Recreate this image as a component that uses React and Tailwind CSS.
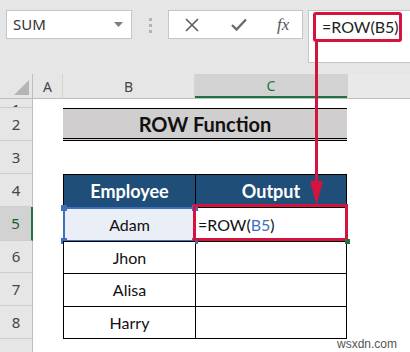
const rows = [
  { n: "1", h: "h-[9px]" },
  { n: "2", h: "h-[33px]", kind: "title" },
  { n: "3", h: "h-[33px]" },
  { n: "4", h: "h-[33px]", kind: "head" },
  { n: "5", h: "h-[34px]", kind: "data", b: "Adam", sel: true },
  { n: "6", h: "h-[32px]", kind: "data", b: "Jhon" },
  { n: "7", h: "h-[33px]", kind: "data", b: "Alisa" },
  { n: "8", h: "h-[33px]", kind: "data", b: "Harry", last: true },
  { n: "", h: "h-[20px]" },
];

const cellFont = { fontFamily: "Lato, 'Open Sans', sans-serif" };
const uiFont = { fontFamily: "'Noto Sans', 'Open Sans', sans-serif" };

function Handle({ pos }) {
  return <span className={`absolute h-[6px] w-[6px] bg-[#3f6fbf] ${pos}`} />;
}

function RowHeader({ row }) {
  const active = row.sel;
  const tiny = row.n === "1";
  return (
    <div
      className={`relative flex w-[33px] shrink-0 justify-center overflow-hidden border-b border-[#cdcdcd] text-[15px] ${
        tiny ? "" : "items-center"
      } ${
        active
          ? "border-r-2 border-r-[#217346] bg-[#d2d2d2] text-[#1d5a36]"
          : "border-r border-r-[#bfbfbf] bg-[#e6e6e6] text-[#444]"
      }`}
      style={uiFont}
    >
      {tiny ? (
        <span className="absolute bottom-[-12px] text-[15px] leading-[20px]">1</span>
      ) : (
        row.n
      )}
    </div>
  );
}

function Row({ row }) {
  let body = null;
  if (row.kind === "title") {
    body = (
      <div
        className="flex w-[284px] items-center justify-center border-t border-b-[3px] border-double border-black bg-[#d0cece] text-[20px] font-bold text-[#111]"
        style={cellFont}
      >
        ROW Function
      </div>
    );
  } else if (row.kind === "head") {
    body = (
      <>
        <div
          className="flex w-[132px] items-center justify-center border-t border-l border-black bg-[#1f4e78] text-[18px] font-bold text-white"
          style={cellFont}
        >
          Employee
        </div>
        <div
          className="flex w-[152px] items-center justify-center border-t border-l border-r border-black bg-[#1f4e78] text-[18px] font-bold text-white"
          style={cellFont}
        >
          Output
        </div>
      </>
    );
  } else if (row.kind === "data") {
    const bottom = row.last ? "border-b" : "";
    body = (
      <>
        <div
          className={`relative flex w-[132px] items-center justify-center border-t border-l border-black text-[16px] text-[#111] ${bottom} ${
            row.sel ? "bg-[#e9eef7]" : "bg-white"
          }`}
          style={cellFont}
        >
          {row.b}
          {row.sel && (
            <div className="absolute -inset-[1px] border-2 border-[#3f6fbf]">
              <Handle pos="-left-[4px] -top-[4px]" />
              <Handle pos="-left-[4px] -bottom-[4px]" />
              <Handle pos="-right-[4px] -top-[4px]" />
              <Handle pos="-right-[4px] -bottom-[4px]" />
            </div>
          )}
        </div>
        <div
          className={`flex w-[152px] items-center border-t border-l border-r border-black bg-white pl-[2px] text-[16px] text-[#111] ${bottom}`}
          style={cellFont}
        >
          {row.sel && (
            <span>
              =ROW(<span className="text-[#3f6fbf]">B5</span>)
            </span>
          )}
        </div>
      </>
    );
  }
  return (
    <div className={`flex ${row.h}`}>
      <RowHeader row={row} />
      <div className="w-[30px] shrink-0 bg-white" />
      {body || <div className="w-[284px] bg-white" />}
      <div className="flex-1 bg-white" />
    </div>
  );
}

export default function App() {
  return (
    <div className="relative h-[352px] w-[410px] overflow-hidden bg-[#e6e6e6]">
      {/* formula bar */}
      <div className="flex h-[74px] items-start pt-[10px] pl-[6px]">
        <div
          className="flex h-[29px] w-[126px] items-center justify-between border border-[#c6c6c6] bg-white pl-[6px] pr-[8px] text-[15px] text-[#333]"
          style={uiFont}
        >
          SUM
          <svg width="9" height="6" viewBox="0 0 9 6">
            <path d="M0 0 L9 0 L4.5 5 Z" fill="#7d7d7d" />
          </svg>
        </div>
        <div className="ml-[17px] mt-[8px] flex flex-col gap-[3px]">
          <span className="h-[3px] w-[3px] bg-[#b3b3b3]" />
          <span className="h-[3px] w-[3px] bg-[#b3b3b3]" />
          <span className="h-[3px] w-[3px] bg-[#b3b3b3]" />
        </div>
        <div className="ml-[16px] flex h-[29px] w-[135px] items-center border border-[#c6c6c6] bg-white">
          <svg className="ml-[16px]" width="14" height="14" viewBox="0 0 14 14">
            <path d="M1 1 L13 13 M13 1 L1 13" stroke="#5c5c5c" strokeWidth="1.6" />
          </svg>
          <svg className="ml-[32px]" width="16" height="13" viewBox="0 0 16 13">
            <path d="M1 7 L5.5 11.5 L15 1.5" stroke="#6b6b6b" strokeWidth="2.4" fill="none" />
          </svg>
          <span
            className="ml-[30px] text-[17px] italic text-[#555]"
            style={{ fontFamily: "'Liberation Serif', serif" }}
          >
            fx
          </span>
        </div>
        <div
          className="ml-[5px] h-[53px] flex-1 border border-r-0 border-[#c6c6c6] bg-white pl-[13px] pt-[4px] text-[16px] text-[#222]"
          style={cellFont}
        >
          =ROW(B5)
        </div>
      </div>

      {/* column headers */}
      <div className="flex h-[25px] border-b border-[#bdbdbd]" style={uiFont}>
        <div className="flex w-[33px] shrink-0 items-end justify-end border-r border-[#bfbfbf] bg-[#e6e6e6] pr-[3px] pb-[3px]">
          <svg width="15" height="15" viewBox="0 0 15 15">
            <path d="M15 0 L15 15 L0 15 Z" fill="#b5b5b5" />
          </svg>
        </div>
        <div className="flex w-[30px] items-center justify-center border-r border-[#d4d4d4] bg-[#e6e6e6] text-[14px] text-[#444]">
          A
        </div>
        <div className="flex w-[132px] items-center justify-center border-r border-[#d4d4d4] bg-[#e6e6e6] text-[14px] text-[#444]">
          B
        </div>
        <div className="flex w-[152px] items-center justify-center border-b-2 border-[#217346] bg-[#d2d2d2] text-[14px] text-[#217346]">
          C
        </div>
        <div className="flex-1 border-l border-[#d4d4d4] bg-[#e9e9e9]" />
      </div>

      {/* grid */}
      {rows.map((r, i) => (
        <Row key={i} row={r} />
      ))}

      {/* annotation overlay */}
      <div className="absolute left-[313px] top-[12px] h-[30px] w-[89px] rounded-[3px] border-[3px] border-[#d5133f]" />
      <div className="absolute left-[315px] top-[42px] h-[142px] w-[3px] bg-[#d5133f]" />
      <svg className="absolute left-[310px] top-[181px]" width="13" height="24" viewBox="0 0 13 24">
        <path d="M0 0 L13 0 L6.5 24 Z" fill="#d5133f" />
      </svg>
      <div className="absolute left-[193px] top-[204px] h-[37px] w-[155px] border-[3px] border-[#d5133f]" />
      <span className="absolute left-[345px] top-[239px] h-[5px] w-[5px] bg-[#217346]" />

      <span
        className="absolute left-[337px] top-[335px] text-[12px] text-[#555]"
        style={{ fontFamily: "'Liberation Sans', sans-serif" }}
      >
        wsxdn.com
      </span>
    </div>
  );
}
